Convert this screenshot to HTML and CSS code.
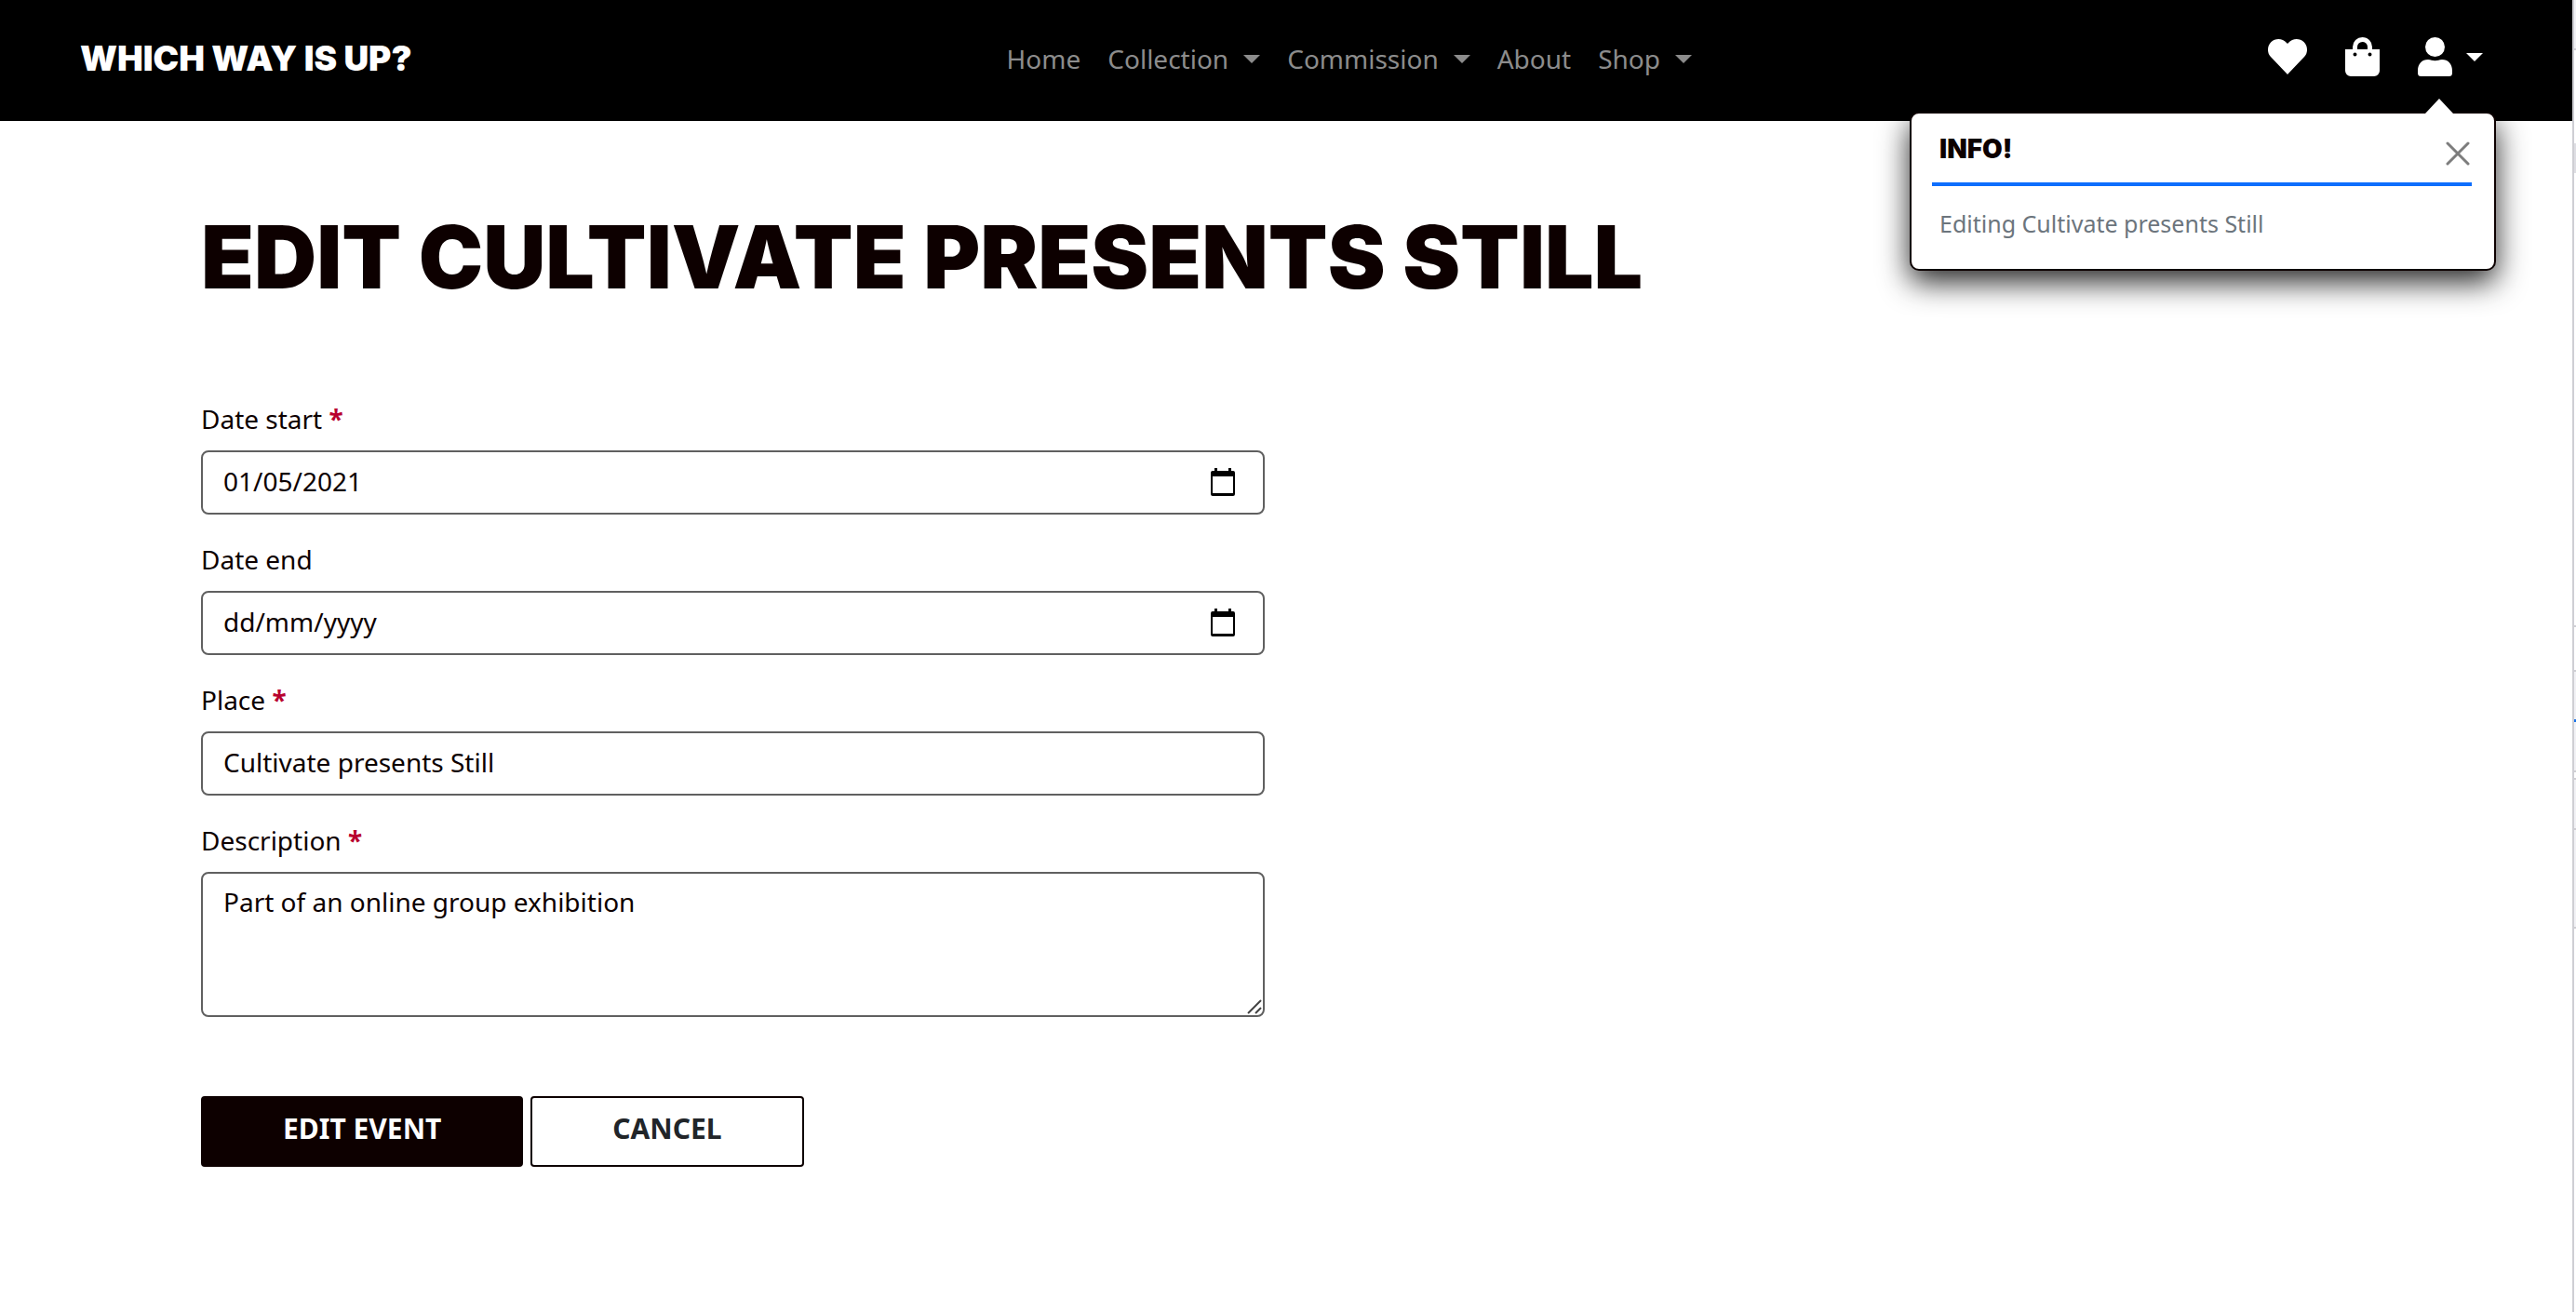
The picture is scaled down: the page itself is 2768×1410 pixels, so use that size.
FILE: index.html
```html
<!DOCTYPE html>
<html lang="en-GB">
<head>
<meta charset="utf-8">
<title>Edit event - Which way is up?</title>
<link rel="stylesheet" href="styles.css">
</head>
<body>
<div class="page">
  <header class="navbar">
    <a class="brand" href="#">WHICH WAY IS UP?</a>
    <nav class="menu" aria-label="Main">
      <a class="menu-link" href="#">Home</a>
      <a class="menu-link menu-link--drop" href="#">Collection</a>
      <a class="menu-link menu-link--drop" href="#">Commission</a>
      <a class="menu-link" href="#">About</a>
      <a class="menu-link menu-link--drop" href="#">Shop</a>
    </nav>
    <div class="tools">
      <a class="tool" href="#" aria-label="Wishlist">
        <svg class="icon icon--heart" viewBox="0 0 42 38"><path d="M21 38 2.700 18.800C-1.200 14.400-.8 7.300 3.300 3.300 8-1.300 15.500-1 20 3.900l1 1.200 1-1.200c4.500-4.900 12-5.200 16.700-.6 4.100 4 4.500 11.100.6 15.500z"/></svg>
      </a>
      <a class="tool" href="#" aria-label="Shopping bag">
        <svg class="icon icon--bag" viewBox="0 0 37 42"><path fill-rule="evenodd" d="M8 13V10.500a10.500 10.500 0 0 1 21 0V13h8v23a6 6 0 0 1-6 6H6a6 6 0 0 1-6-6V13zm5 0h11v-2.500a5.500 5.500 0 0 0-11 0zM10.500 16.500a2 2 0 1 0 0 4 2 2 0 0 0 0-4m16 0a2 2 0 1 0 0 4 2 2 0 0 0 0-4"/></svg>
      </a>
      <a class="tool tool--drop" href="#" aria-label="Account">
        <svg class="icon icon--user" viewBox="0 0 37 42"><circle cx="18.500" cy="10.500" r="10.500"/><path d="M0 36c0-7.500 4.500-12 11-12 3 0 4.500 1.300 7.500 1.300S23 24 26 24c6.500 0 11 4.500 11 12v2.500a3.500 3.500 0 0 1-3.500 3.500h-30A3.500 3.500 0 0 1 0 38.500z"/></svg>
      </a>
    </div>
    <div class="toast" role="status">
      <div class="toast-head">
        <strong class="toast-title">INFO!</strong>
        <button class="toast-close" type="button" aria-label="Close">
          <svg class="cross" viewBox="0 0 26 26"><path d="M2 2 24 24M24 2 2 24"/></svg>
        </button>
      </div>
      <p class="toast-text">Editing Cultivate presents Still</p>
    </div>
  </header>

  <main class="content">
    <h1 class="title">EDIT CULTIVATE PRESENTS STILL</h1>
    <form class="form">
      <div class="field">
        <label class="label" for="start">Date start <span class="req">*</span></label>
        <div class="control">
          <input class="input" id="start" type="text" value="01/05/2021" placeholder="dd/mm/yyyy">
          <button class="picker" type="button" aria-label="Choose start date"><svg class="calendar" viewBox="0 0 26 30"><path fill-rule="evenodd" d="M4 0h3v3h12V0h3v3h2a2 2 0 0 1 2 2v23a2 2 0 0 1-2 2H2a2 2 0 0 1-2-2V5a2 2 0 0 1 2-2h2zM2 9v18h22V9z"/></svg></button>
        </div>
      </div>
      <div class="field">
        <label class="label" for="end">Date end</label>
        <div class="control">
          <input class="input" id="end" type="text" placeholder="dd/mm/yyyy">
          <button class="picker" type="button" aria-label="Choose end date"><svg class="calendar" viewBox="0 0 26 30"><path fill-rule="evenodd" d="M4 0h3v3h12V0h3v3h2a2 2 0 0 1 2 2v23a2 2 0 0 1-2 2H2a2 2 0 0 1-2-2V5a2 2 0 0 1 2-2h2zM2 9v18h22V9z"/></svg></button>
        </div>
      </div>
      <div class="field">
        <label class="label" for="place">Place <span class="req">*</span></label>
        <input class="input" id="place" type="text" value="Cultivate presents Still">
      </div>
      <div class="field">
        <label class="label" for="description">Description <span class="req">*</span></label>
        <div class="control">
          <textarea class="input input--area" id="description">Part of an online group exhibition</textarea>
          <svg class="grip" viewBox="0 0 16 16"><path d="M1 15 15 1M9 15l6-6"/></svg>
        </div>
      </div>
      <div class="actions">
        <button class="btn btn--primary" type="submit">EDIT EVENT</button>
        <button class="btn" type="button">CANCEL</button>
      </div>
    </form>
  </main>
</div>
</body>
</html>
```
FILE: styles.css
```css
* { box-sizing: border-box; }

/* The strip beside the page shows the edge of the neighbouring panel */
body {
  margin: 0;
  background: linear-gradient(
    #f2f2f5 52px, #cfcfd4 52px 54px, #fff 54px 154px, #dedee3 154px 186px,
    #fff 186px 672px, #cfcfd4 672px 674px, #fff 674px 720px, #cfcfd4 720px 722px,
    #f2f2f5 722px 773px, #1a73e8 773px 776px, #f2f2f5 776px 828px, #cfcfd4 828px 830px,
    #fff 830px 836px, #cfcfd4 836px 838px, #f2f2f5 838px 890px, #cfcfd4 890px 892px,
    #f2f2f5 892px 996px, #cfcfd4 996px 998px, #fff 998px);
  color: #0d0000;
  font: 28px/40px "Noto Sans", sans-serif;
}

.page {
  min-height: 100vh;
  margin-right: 2px;
  border-right: 2px solid #cfcfd4;
  background: #fff;
}

/* Top bar */
.navbar {
  position: relative;
  display: flex;
  justify-content: space-between;
  align-items: center;
  height: 130px;
  padding: 0 96px 4px 86px;
  background: #000;
}

.brand {
  color: #fff;
  font: 900 37px/40px Inter, sans-serif;
  text-decoration: none;
}

.menu { display: flex; gap: 29px; padding-left: 20px; }

.menu-link {
  display: flex;
  align-items: center;
  gap: 16px;
  color: #8c8c8c;
  text-decoration: none;
}

.menu-link--drop::after,
.tool--drop::after {
  content: "";
  border: 9px solid transparent;
  border-top-color: currentColor;
  border-bottom: 0;
}

.tools { display: flex; align-items: center; gap: 41px; padding-bottom: 4px; }

.tool { display: flex; align-items: center; gap: 15px; color: #fff; }

.icon { display: block; fill: currentColor; }
.icon--heart { width: 42px; height: 38px; }
.icon--bag, .icon--user { width: 37px; height: 42px; }

/* Message under the account icon */
.toast {
  position: absolute;
  top: 120px;
  right: 82px;
  width: 630px;
  padding: 12px 24px 29px 22px;
  background: #fff;
  border: 2px solid #0d0000;
  border-radius: 10px;
  box-shadow: 0 12px 32px rgba(0, 0, 0, .85);
}

.toast::before {
  content: "";
  position: absolute;
  right: 44px;
  bottom: 100%;
  border: 15px solid transparent;
  border-bottom: 16px solid #fff;
  border-top: 0;
}

.toast-head {
  display: flex;
  justify-content: space-between;
  align-items: flex-start;
  height: 66px;
  padding: 6px 2px 0 8px;
  border-bottom: 4px solid #0d6efd;
}

.toast-title { font: 900 28px/40px Inter, sans-serif; }

.toast-close {
  display: flex;
  padding: 12px 0 0;
  border: 0;
  background: none;
  cursor: pointer;
}

.cross { width: 26px; height: 26px; fill: none; stroke: #7d7d7d; stroke-width: 3; stroke-linecap: round; }

.toast-text { margin: 20px 0 0 8px; color: #6c757d; font-size: 25px; line-height: 40px; }

/* Form */
.content { padding: 96px 216px 156px; }

.title { margin: 0; font: 900 93px/100px Inter, sans-serif; }

.form { width: 49%; margin-top: 104px; }

.field { margin-bottom: 28px; }

.label { display: block; margin-bottom: 14px; }

.req { color: #b8002e; font-weight: 700; }

.control { position: relative; }

.input {
  display: block;
  width: 100%;
  height: 69px;
  padding: 10px 22px 14px;
  border: 2px solid #606060;
  border-radius: 8px;
  background: #fff;
  color: #0d0000;
  font: inherit;
}

.input::placeholder { color: #0d0000; opacity: 1; }

.input--area { height: 156px; resize: none; }

.picker {
  position: absolute;
  top: 19px;
  right: 32px;
  padding: 0;
  border: 0;
  background: none;
  cursor: pointer;
}

.calendar { display: block; width: 26px; height: 30px; }

.grip {
  position: absolute;
  right: 3px;
  bottom: 3px;
  width: 16px;
  height: 16px;
  stroke: #444;
  stroke-width: 2;
}

.actions { display: flex; gap: 8px; margin-top: 85px; }

.btn {
  padding: 13px 86px 19px;
  border: 2px solid #0d0000;
  border-radius: 4px;
  background: #fff;
  color: #212529;
  font: 700 30px/40px "Noto Sans", sans-serif;
  cursor: pointer;
}

.btn--primary { background: #0d0000; color: #fff; }
```
